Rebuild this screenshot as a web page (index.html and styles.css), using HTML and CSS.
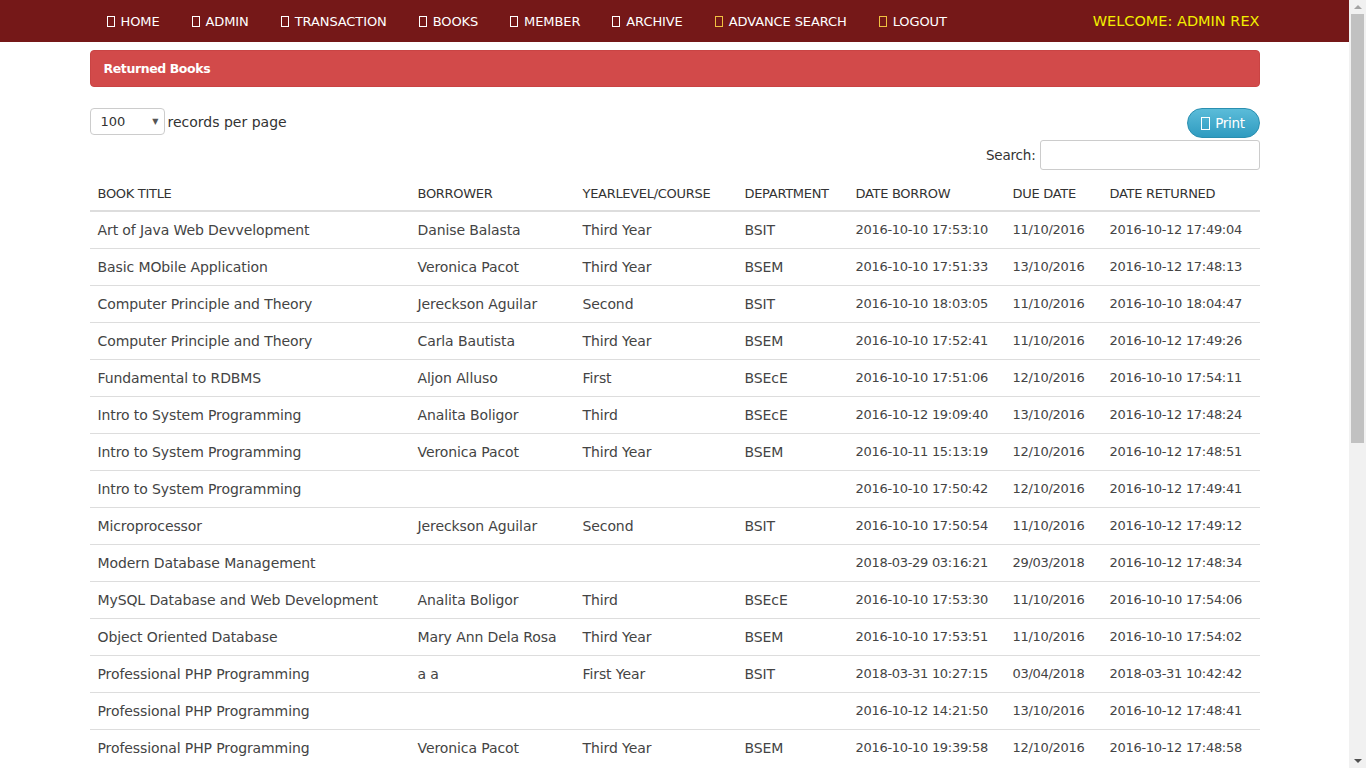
FILE: index.html
```html
<!DOCTYPE html>
<html>
<head>
<meta charset="utf-8">
<title>Returned Books</title>
<link rel="stylesheet" href="styles.css">
</head>
<body>
<div class="page">
<nav class="navbar">
  <div class="container nav-inner">
    <ul class="nav">
      <li><span class="ico"></span>HOME</li>
      <li><span class="ico"></span>ADMIN</li>
      <li><span class="ico"></span>TRANSACTION</li>
      <li><span class="ico"></span>BOOKS</li>
      <li><span class="ico"></span>MEMBER</li>
      <li><span class="ico"></span>ARCHIVE</li>
      <li><span class="ico ico-warn"></span>ADVANCE SEARCH</li>
      <li><span class="ico ico-warn"></span>LOGOUT</li>
    </ul>
    <div class="welcome">WELCOME: ADMIN REX</div>
  </div>
</nav>
<main class="container">
  <div class="panel-heading">Returned Books</div>
  <div class="tools">
    <div class="length">
      <div class="select"><span>100</span><span class="caret">&#9660;</span></div>
      <span>records per page</span>
    </div>
    <button class="btn-print"><span class="ico ico-print"></span>Print</button>
  </div>
  <div class="search-row">
    <label class="search-label">Search:</label>
    <div class="search-input"></div>
  </div>
  <table class="table">
    <colgroup>
      <col class="c1"><col class="c2"><col class="c3"><col class="c4"><col class="c5"><col class="c6"><col class="c7">
    </colgroup>
    <thead>
      <tr><th>BOOK TITLE</th><th>BORROWER</th><th>YEARLEVEL/COURSE</th><th>DEPARTMENT</th><th>DATE BORROW</th><th>DUE DATE</th><th>DATE RETURNED</th></tr>
    </thead>
    <tbody>
      <tr><td>Art of Java Web Devvelopment</td><td>Danise Balasta</td><td>Third Year</td><td>BSIT</td><td class="d">2016-10-10 17:53:10</td><td class="d">11/10/2016</td><td class="d">2016-10-12 17:49:04</td></tr>
      <tr><td>Basic MObile Application</td><td>Veronica Pacot</td><td>Third Year</td><td>BSEM</td><td class="d">2016-10-10 17:51:33</td><td class="d">13/10/2016</td><td class="d">2016-10-12 17:48:13</td></tr>
      <tr><td>Computer Principle and Theory</td><td>Jereckson Aguilar</td><td>Second</td><td>BSIT</td><td class="d">2016-10-10 18:03:05</td><td class="d">11/10/2016</td><td class="d">2016-10-10 18:04:47</td></tr>
      <tr><td>Computer Principle and Theory</td><td>Carla Bautista</td><td>Third Year</td><td>BSEM</td><td class="d">2016-10-10 17:52:41</td><td class="d">11/10/2016</td><td class="d">2016-10-12 17:49:26</td></tr>
      <tr><td>Fundamental to RDBMS</td><td>Aljon Alluso</td><td>First</td><td>BSEcE</td><td class="d">2016-10-10 17:51:06</td><td class="d">12/10/2016</td><td class="d">2016-10-10 17:54:11</td></tr>
      <tr><td>Intro to System Programming</td><td>Analita Boligor</td><td>Third</td><td>BSEcE</td><td class="d">2016-10-12 19:09:40</td><td class="d">13/10/2016</td><td class="d">2016-10-12 17:48:24</td></tr>
      <tr><td>Intro to System Programming</td><td>Veronica Pacot</td><td>Third Year</td><td>BSEM</td><td class="d">2016-10-11 15:13:19</td><td class="d">12/10/2016</td><td class="d">2016-10-12 17:48:51</td></tr>
      <tr><td>Intro to System Programming</td><td></td><td></td><td></td><td class="d">2016-10-10 17:50:42</td><td class="d">12/10/2016</td><td class="d">2016-10-12 17:49:41</td></tr>
      <tr><td>Microprocessor</td><td>Jereckson Aguilar</td><td>Second</td><td>BSIT</td><td class="d">2016-10-10 17:50:54</td><td class="d">11/10/2016</td><td class="d">2016-10-12 17:49:12</td></tr>
      <tr><td>Modern Database Management</td><td></td><td></td><td></td><td class="d">2018-03-29 03:16:21</td><td class="d">29/03/2018</td><td class="d">2016-10-12 17:48:34</td></tr>
      <tr><td>MySQL Database and Web Development</td><td>Analita Boligor</td><td>Third</td><td>BSEcE</td><td class="d">2016-10-10 17:53:30</td><td class="d">11/10/2016</td><td class="d">2016-10-10 17:54:06</td></tr>
      <tr><td>Object Oriented Database</td><td>Mary Ann Dela Rosa</td><td>Third Year</td><td>BSEM</td><td class="d">2016-10-10 17:53:51</td><td class="d">11/10/2016</td><td class="d">2016-10-10 17:54:02</td></tr>
      <tr><td>Professional PHP Programming</td><td>a a</td><td>First Year</td><td>BSIT</td><td class="d">2018-03-31 10:27:15</td><td class="d">03/04/2018</td><td class="d">2018-03-31 10:42:42</td></tr>
      <tr><td>Professional PHP Programming</td><td></td><td></td><td></td><td class="d">2016-10-12 14:21:50</td><td class="d">13/10/2016</td><td class="d">2016-10-12 17:48:41</td></tr>
      <tr><td>Professional PHP Programming</td><td>Veronica Pacot</td><td>Third Year</td><td>BSEM</td><td class="d">2016-10-10 19:39:58</td><td class="d">12/10/2016</td><td class="d">2016-10-12 17:48:58</td></tr>
    </tbody>
  </table>
</main>
</div>
<div class="scrollbar">
  <span class="arrow up"></span>
  <div class="track"><div class="thumb"></div></div>
  <span class="arrow down"></span>
</div>
</body>
</html>
```

FILE: styles.css
```css
* { box-sizing: border-box; }
html, body { margin: 0; padding: 0; }
body {
  font-family: "DejaVu Sans", "Liberation Sans", sans-serif;
  font-size: 14px;
  color: #333;
  background: #fff;
  display: flex;
  height: 768px;
  overflow: hidden;
}
.page {
  width: 1349px;
  flex: none;
  height: 768px;
  overflow: hidden;
}
.container {
  width: 1170px;
  margin: 0 auto;
}
.navbar {
  background: #751818;
  height: 42px;
}
.nav-inner {
  display: flex;
  align-items: center;
  justify-content: space-between;
  height: 42px;
}
.nav {
  list-style: none;
  margin: 0;
  padding: 0;
  display: flex;
}
.nav li {
  color: #fff;
  font-size: 13px;
  padding: 0 15px 0 17px;
  display: flex;
  align-items: center;
  letter-spacing: -0.1px;
}
.ico {
  display: inline-block;
  width: 8px;
  height: 11px;
  border: 1px solid #fff;
  margin-right: 6px;
}
.ico-warn { border-color: #f0c040; }
.welcome {
  color: #f2ef00;
  font-size: 14.5px;
  margin-top: -1px;
}
.panel-heading {
  margin-top: 8px;
  height: 37px;
  background: #d24a4a;
  border: 1px solid #c94444;
  border-radius: 4px;
  color: #fff;
  font-weight: bold;
  font-size: 12.5px;
  padding: 0 13px;
  display: flex;
  align-items: center;
  letter-spacing: -0.4px;
}
.tools {
  display: flex;
  justify-content: space-between;
  align-items: flex-start;
  margin-top: 21px;
}
.length {
  display: flex;
  align-items: center;
  gap: 3px;
  font-size: 14px;
  color: #333;
}
.select {
  width: 75px;
  height: 27px;
  border: 1px solid #ccc;
  border-radius: 4px;
  display: flex;
  align-items: center;
  justify-content: space-between;
  padding: 0 5px 0 10px;
  font-size: 13px;
}
.caret { font-size: 8px; color: #555; }
.btn-print {
  width: 73px;
  height: 30px;
  border-radius: 15px;
  border: 1px solid #2a8fb0;
  background: linear-gradient(#5bbcd9, #2f9bc0);
  color: #fff;
  font-family: inherit;
  font-size: 13.5px;
  display: flex;
  align-items: center;
  justify-content: center;
  padding: 0;
  letter-spacing: -0.3px;
}
.ico-print { margin-right: 5px; height: 13px; width: 9px; }
.search-row {
  display: flex;
  justify-content: flex-end;
  align-items: center;
  gap: 4px;
  margin-top: 2px;
}
.search-label { font-size: 13.5px; letter-spacing: -0.2px; }
.search-input {
  width: 220px;
  height: 30px;
  border: 1px solid #ccc;
  border-radius: 3px;
}
.table {
  width: 100%;
  border-collapse: collapse;
  table-layout: fixed;
  margin-top: 4px;
}
.c1 { width: 320px; }
.c2 { width: 165px; }
.c3 { width: 162px; }
.c4 { width: 111px; }
.c5 { width: 157px; }
.c6 { width: 97px; }
.c7 { width: 158px; }
.table th {
  text-align: left;
  font-weight: normal;
  font-size: 13px;
  color: #333;
  padding: 10px 8px 6px;
  line-height: 20px;
  border-bottom: 2px solid #ddd;
  white-space: nowrap;
  letter-spacing: -0.3px;
}
.table td {
  padding: 8px;
  line-height: 20px;
  border-top: 1px solid #ddd;
  font-size: 14px;
  color: #444;
  white-space: nowrap;
  overflow: hidden;
  letter-spacing: -0.1px;
}
.table td.d {
  font-size: 13px;
  letter-spacing: -0.3px;
}
.table tbody tr:first-child td { border-top: none; }
.scrollbar {
  width: 17px;
  flex: none;
  height: 768px;
  background: #f1f1f1;
  display: flex;
  flex-direction: column;
  align-items: center;
}
.arrow {
  width: 0;
  height: 0;
  border-left: 4px solid transparent;
  border-right: 4px solid transparent;
  margin: 5px 0;
}
.arrow.up { border-bottom: 4px solid #a3a3a3; }
.arrow.down { border-top: 4px solid #505050; }
.track {
  flex: 1;
  width: 100%;
  padding: 0 2px;
}
.thumb {
  height: 429px;
  background: #c1c1c1;
}
```
